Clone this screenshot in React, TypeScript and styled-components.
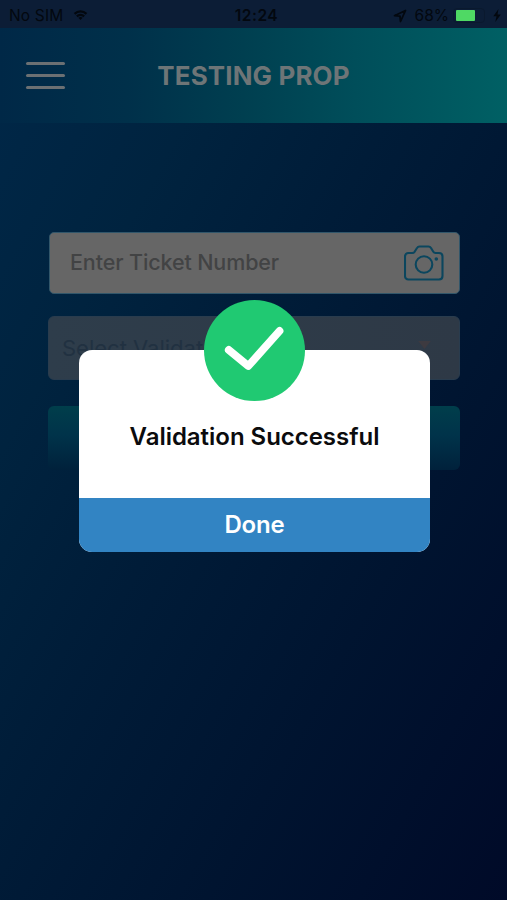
import React from "react";
import styled, { createGlobalStyle } from "styled-components";

const GlobalStyle = createGlobalStyle`
  * { box-sizing: border-box; }
  body { margin: 0; background: #001230; }
`;

const Screen = styled.div`
  position: relative;
  width: 507px;
  height: 900px;
  overflow: hidden;
  display: flex;
  flex-direction: column;
  font-family: Inter, "Liberation Sans", sans-serif;
  background: linear-gradient(119deg, #002849 0%, #00233f 25%, #001c38 45%, #001430 70%, #000a28 100%);
`;

const StatusBar = styled.header`
  height: 28px;
  padding: 3px 6px 0 9px;
  display: grid;
  grid-template-columns: 1fr auto 1fr;
  align-items: center;
  background: #0c1d36;
  color: #03080f;
`;

const StatusGroup = styled.div<{ $end?: boolean }>`
  display: flex;
  align-items: center;
  justify-content: ${(p) => (p.$end ? "flex-end" : "flex-start")};
`;

const StatusText = styled.span<{ $bold?: boolean; $spacing?: number }>`
  font-size: 15.5px;
  line-height: 20px;
  font-weight: ${(p) => (p.$bold ? 600 : 400)};
  letter-spacing: ${(p) => p.$spacing ?? 0}px;
  white-space: nowrap;
`;

const Clock = styled(StatusText)`
  padding-left: 3px;
`;

const WifiIcon = styled.svg`
  margin-left: 10px;
`;

const LocationIcon = styled.svg`
  margin-right: 8px;
`;

const Battery = styled.div`
  width: 32px;
  height: 15px;
  margin: 0 8px 1px 4px;
  padding: 1px 2px;
  border-radius: 4px;
  border: 1px solid #0a192e;
`;

const BatteryLevel = styled.div`
  width: 19px;
  height: 11px;
  border-radius: 1px;
  background: #4fd964;
`;

const AppBar = styled.nav`
  height: 95px;
  display: grid;
  grid-template-columns: 66px 1fr 66px;
  align-items: center;
  background: linear-gradient(90deg, #002847 0%, #00304a 25%, #003f50 48%, #004e5a 70%, #006064 100%);
`;

const MenuButton = styled.button`
  display: flex;
  flex-direction: column;
  gap: 9px;
  width: 39.5px;
  margin: 0 0 0 25.5px;
  padding: 0;
  border: 0;
  background: none;
`;

const MenuLine = styled.span`
  height: 3px;
  border-radius: 1.5px;
  background: #6b7073;
`;

const Title = styled.h1`
  margin: 1px 0 0;
  text-align: center;
  font-size: 26px;
  line-height: 32px;
  font-weight: 700;
  letter-spacing: 0.1px;
  color: #6e7577;
`;

const Form = styled.main`
  display: flex;
  flex-direction: column;
  padding: 108.5px 47px 0 48px;
`;

const TicketField = styled.div`
  height: 62.5px;
  margin: 0 0 0 1px;
  padding: 0 15.5px 0 20px;
  display: flex;
  align-items: center;
  justify-content: space-between;
  border: 1px solid #31566a;
  border-radius: 5px;
  background: #666;
`;

const Placeholder = styled.span<{ $dim?: boolean }>`
  margin-top: ${(p) => (p.$dim ? 0 : -1)}px;
  font-size: ${(p) => (p.$dim ? 22 : 21.5)}px;
  line-height: 28px;
  font-weight: ${(p) => (p.$dim ? 400 : 500)};
  letter-spacing: ${(p) => (p.$dim ? 0 : -0.12)}px;
  color: ${(p) => (p.$dim ? "#213141" : "#424344")};
`;

const SelectField = styled.div`
  height: 64px;
  margin-top: 22px;
  padding: 0 28px 0 13px;
  display: flex;
  align-items: center;
  justify-content: space-between;
  border: 1px solid #293c4e;
  border-radius: 6px;
  background: linear-gradient(90deg, #2e3d4b, #2e3946);
`;

const SelectArrow = styled.svg`
  margin-bottom: 5px;
`;

const SubmitButton = styled.button`
  height: 64px;
  margin-top: 26px;
  border: 0;
  border-radius: 6px;
  background: linear-gradient(180deg, #003e4b 0%, #00334a 45%, #00213b 100%);
`;

const Modal = styled.section`
  position: absolute;
  left: 79px;
  top: 350px;
  width: 351px;
  height: 201.5px;
  display: flex;
  flex-direction: column;
  align-items: stretch;
  border-radius: 13px;
  background: #fff;
`;

const SuccessBadge = styled.svg`
  position: absolute;
  left: 124.5px;
  top: -50.5px;
`;

const Message = styled.div`
  flex: 1;
  display: flex;
  align-items: center;
  justify-content: center;
  padding-top: 25px;
  font-size: 24px;
  line-height: 30px;
  font-weight: 600;
  letter-spacing: -0.03px;
  white-space: nowrap;
  color: #0b0b0d;
`;

const DoneButton = styled.button`
  height: 53.5px;
  padding: 0;
  border: 0;
  border-radius: 0 0 13px 13px;
  background: #3284c3;
  color: #fff;
  font: 600 24px/30px Inter, "Liberation Sans", sans-serif;
  letter-spacing: -0.2px;
`;

export default function App() {
  return (
    <>
      <GlobalStyle />
      <Screen>
        <StatusBar>
          <StatusGroup>
            <StatusText $spacing={0.15}>No SIM</StatusText>
            <WifiIcon width="15" height="11" viewBox="0 0 16 12" fill="none" stroke="currentColor" strokeWidth="2.4">
              <path d="M1.5 4.2C5.2.7 10.8.7 14.5 4.2" />
              <path d="M4 7C6.3 4.9 9.7 4.9 12 7" />
              <path d="M5.7 8.5C7 7.3 9 7.3 10.3 8.5L8 11Z" fill="currentColor" stroke="none" />
            </WifiIcon>
          </StatusGroup>
          <Clock $bold $spacing={0.5}>12:24</Clock>
          <StatusGroup $end>
            <LocationIcon width="14" height="14" viewBox="0 0 14 14" fill="none" stroke="currentColor" strokeWidth="1.8" strokeLinejoin="round">
              <path d="M12.5 1.5 1.5 6.7 7 7.2 7.5 12.5Z" />
            </LocationIcon>
            <StatusText>68%</StatusText>
            <Battery>
              <BatteryLevel />
            </Battery>
            <svg width="8" height="13" viewBox="0 0 8 13" fill="currentColor">
              <path d="M5.5 0 .3 7.2H3.5L2.3 13 7.8 5.4H4.5Z" />
            </svg>
          </StatusGroup>
        </StatusBar>
        <AppBar>
          <MenuButton aria-label="Menu">
            <MenuLine />
            <MenuLine />
            <MenuLine />
          </MenuButton>
          <Title>TESTING PROP</Title>
        </AppBar>
        <Form>
          <TicketField>
            <Placeholder>Enter Ticket Number</Placeholder>
            <svg width="40" height="36" viewBox="0 0 40 36" fill="none" stroke="#0b465e" strokeWidth="2.1" strokeLinejoin="round">
              <path d="M4.5 8H8.2C9.2 8 10 7.6 10.6 6.8L13 3C13.6 2 14.4 1.5 15.5 1.5H24.5C25.6 1.5 26.4 2 27 3L29.3 6.8C29.8 7.6 30.6 8 31.6 8H35C37.1 8 38.5 9.4 38.5 11.5V31C38.5 33.1 37.1 34.5 35 34.5H4.5C2.4 34.5 1 33.1 1 31V11.5C1 9.4 2.4 8 4.5 8Z" />
              <circle cx="20" cy="19.5" r="8.3" />
              <circle cx="32.3" cy="14" r="1.8" fill="#0b465e" stroke="none" />
            </svg>
          </TicketField>
          <SelectField>
            <Placeholder $dim>Select Validation</Placeholder>
            <SelectArrow width="13" height="9" viewBox="0 0 14 10" fill="#3d3a40">
              <path d="M0 0H14L7 9Z" />
            </SelectArrow>
          </SelectField>
          <SubmitButton aria-label="Validate" />
        </Form>
        <Modal role="dialog">
          <SuccessBadge width="101" height="101" viewBox="0 0 101 101" fill="none">
            <circle cx="50.5" cy="50.5" r="50.5" fill="#20c972" />
            <path d="M24.8 50 44.3 66 75.5 31" stroke="#fff" strokeWidth="7.8" strokeLinecap="round" strokeLinejoin="round" />
          </SuccessBadge>
          <Message>Validation Successful</Message>
          <DoneButton>Done</DoneButton>
        </Modal>
      </Screen>
    </>
  );
}
